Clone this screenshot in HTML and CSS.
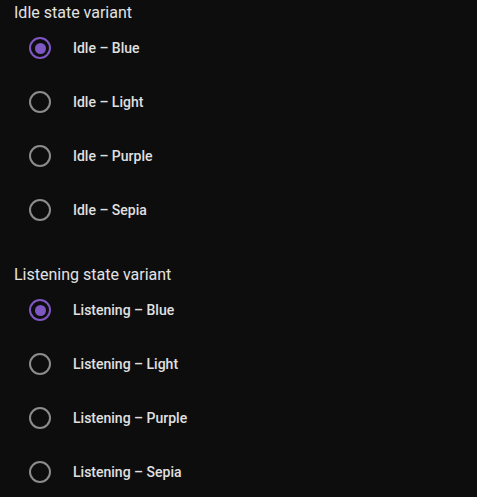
FILE: index.html
```html
<!DOCTYPE html>
<html lang="en">
<head>
<meta charset="utf-8">
<title>State variants</title>
<link rel="stylesheet" href="styles.css">
</head>
<body>
<section class="group">
  <h2 class="group-title">Idle state variant</h2>
  <div class="options">
    <label class="option"><span class="radio checked"></span><span class="label">Idle – Blue</span></label>
    <label class="option"><span class="radio"></span><span class="label">Idle – Light</span></label>
    <label class="option"><span class="radio"></span><span class="label">Idle – Purple</span></label>
    <label class="option"><span class="radio"></span><span class="label">Idle – Sepia</span></label>
  </div>
</section>
<section class="group">
  <h2 class="group-title">Listening state variant</h2>
  <div class="options">
    <label class="option"><span class="radio checked"></span><span class="label">Listening – Blue</span></label>
    <label class="option"><span class="radio"></span><span class="label">Listening – Light</span></label>
    <label class="option"><span class="radio"></span><span class="label">Listening – Purple</span></label>
    <label class="option"><span class="radio"></span><span class="label">Listening – Sepia</span></label>
  </div>
</section>
</body>
</html>
```
FILE: styles.css
```css
html, body {
  margin: 0;
  padding: 0;
  background: #0d0d0d;
}
body {
  font-family: Roboto, "Noto Sans", sans-serif;
  color: #e3e3e3;
  display: flex;
  flex-direction: column;
  gap: 28px;
}
.group-title {
  margin: 0;
  padding: 1px 0 0 14px;
  font-size: 16px;
  font-weight: 400;
  line-height: 23px;
  color: #e3e3e3;
}
.options {
  display: flex;
  flex-direction: column;
  gap: 6px;
}
.option {
  display: flex;
  align-items: center;
  height: 48px;
  padding-left: 29px;
}
.radio {
  box-sizing: border-box;
  width: 22px;
  height: 22px;
  border: 2px solid #8c8c8c;
  border-radius: 50%;
  display: flex;
  align-items: center;
  justify-content: center;
  flex: none;
}
.radio.checked {
  border-color: #7e57c2;
}
.radio.checked::after {
  content: "";
  width: 11px;
  height: 11px;
  border-radius: 50%;
  background: #7e57c2;
}
.label {
  margin-left: 22px;
  font-size: 14px;
  font-weight: 500;
  color: #e0e0e0;
}
```
